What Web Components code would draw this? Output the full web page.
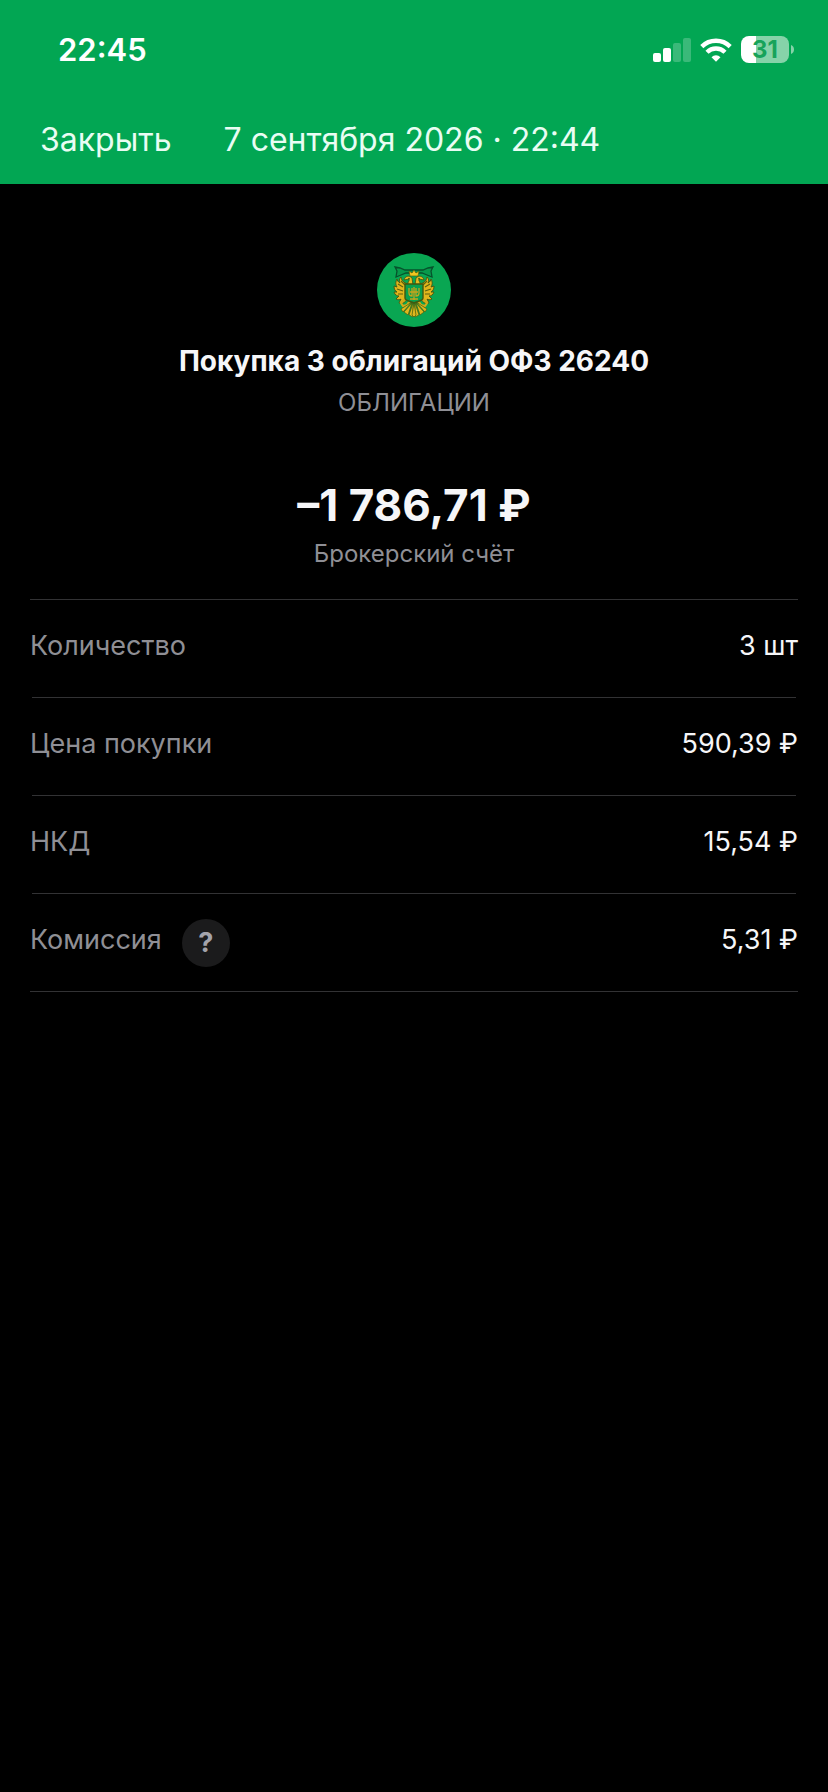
<!DOCTYPE html>
<html lang="ru">
<head>
<meta charset="UTF-8">
<meta name="viewport" content="width=device-width, initial-scale=1">
<title>Покупка 3 облигаций ОФЗ 26240</title>
<style>
    :root {
        --green: #02a653;
        --bg: #000;
        --text-main: #f6f6f8;
        --text-muted: #8f8f95;
        --line: #323234;
        --chip: #1b1b1c;
    }
    body {
        margin: 0;
        min-height: 100vh;
        background: var(--bg);
        color: var(--text-main);
        font-family: Inter, "Liberation Sans", sans-serif;
    }
</style>
</head>
<body>
<operation-screen></operation-screen>

<script>
class StatusBar extends HTMLElement {
    constructor() {
        super();
        this.attachShadow({ mode: 'open' });
    }

    connectedCallback() {
        this.shadowRoot.innerHTML = `
            <style>
                :host {
                    display: flex;
                    justify-content: space-between;
                    align-items: center;
                    height: 99px;
                    padding: 0 34px 0 58px;
                    color: #fff;
                }
                time {
                    font-size: 31px;
                    line-height: 40px;
                    font-weight: 600;
                }
                .icons {
                    display: flex;
                    align-items: center;
                    gap: 9px;
                }
                svg { display: block; }
                .battery {
                    display: flex;
                    align-items: center;
                    gap: 2px;
                }
                .level {
                    width: 48px;
                    height: 27px;
                    border-radius: 8px;
                    background: linear-gradient(90deg, #fff 31%, #86d3a9 31%);
                    color: #17a35a;
                    font-size: 24px;
                    line-height: 27px;
                    font-weight: 700;
                    text-align: center;
                }
            </style>
            <time><slot></slot></time>
            <div class="icons">
                <svg width="38" height="24" viewBox="0 0 38 24" fill="#fff" aria-hidden="true">
                    <rect x="0" y="15" width="8" height="9" rx="2"/>
                    <rect x="10" y="10" width="8" height="14" rx="2"/>
                    <g opacity=".22">
                        <rect x="20" y="5" width="8" height="19" rx="2"/>
                        <rect x="30" y="0" width="8" height="24" rx="2"/>
                    </g>
                </svg>
                <svg width="32" height="24" viewBox="0 0 32 24" fill="none" stroke="#fff" stroke-width="4.4" aria-hidden="true">
                    <path d="M1.8 8.6a20.2 20.2 0 0 1 28.4 0"/>
                    <path d="M7 14.2a12.8 12.8 0 0 1 18 0"/>
                    <path d="M16 23.8l-4.5-4.6a6.4 6.4 0 0 1 9 0z" fill="#fff" stroke="none"/>
                </svg>
                <div class="battery">
                    <div class="level">${this.getAttribute('battery')}</div>
                    <svg width="3" height="9" viewBox="0 0 3 9" fill="#86d3a9" aria-hidden="true">
                        <path d="M0 0c4 1.5 4 7.500 0 9z"/>
                    </svg>
                </div>
            </div>
        `;
    }
}

class NavBar extends HTMLElement {
    constructor() {
        super();
        this.attachShadow({ mode: 'open' });
    }

    connectedCallback() {
        this.shadowRoot.innerHTML = `
            <style>
                :host {
                    display: flex;
                    align-items: center;
                    gap: 52px;
                    padding: 21px 40px 24px;
                    color: #e9fdf3;
                    font-size: 32px;
                    line-height: 40px;
                    white-space: nowrap;
                }
                button {
                    padding: 0;
                    border: none;
                    background: none;
                    color: inherit;
                    font: inherit;
                    cursor: pointer;
                }
                h1 {
                    margin: 0;
                    font: inherit;
                }
            </style>
            <button type="button">Закрыть</button>
            <h1><slot></slot></h1>
        `;
    }
}

class BondLogo extends HTMLElement {
    constructor() {
        super();
        this.attachShadow({ mode: 'open' });
    }

    connectedCallback() {
        this.shadowRoot.innerHTML = `
            <style>
                :host {
                    display: block;
                    width: 74px;
                    height: 74px;
                }
                svg { display: block; }
            </style>
            <svg width="74" height="74" viewBox="0 0 74 74" aria-hidden="true">
                <circle cx="37" cy="37" r="37" fill="#09a652"/>
                <!-- ribbon -->
                <path d="M18 14l5 1 5 2h18l5-2 5-1-2 4 1 6-5-2-5-2H29l-5 2-5 2 1-6z" fill="#08994b" stroke="#06512b" stroke-width="1.3"/>
                <!-- wings -->
                <g id="wing">
                    <path d="M30 31c-3-2-5-2-6-7-2 2-2 4-1 6-2-1-3-3-3-4-2 4-1 6 0 8l-3-1c0 3 1 5 3 6h-3c1 3 3 4 5 4l-3 3c2 1 4 1 5 0l-2 4c3 1 6 0 8-4z" fill="#e0b51c" stroke="#45530f" stroke-width=".9"/>
                    <path d="M21 31l5 3M20 36l6 2M21 41l5 0M24 28l4 4" stroke="#5c610f" stroke-width="1.100"/>
                    <path d="M31 32c-1-3 2-4 1-6l-5 1c1-4 5-5 8-2l1 7z" fill="#e4bd22" stroke="#45530f" stroke-width=".8"/>
                    <path d="M28 46l-4 4 2 3 4-1 3-4" fill="none" stroke="#d2aa19" stroke-width="2.200"/>
                    <circle cx="32" cy="25.500" r=".8" fill="#41500d"/>
                </g>
                <use href="#wing" transform="matrix(-1 0 0 1 74 0)"/>
                <!-- tail -->
                <g fill="#dfb71d" stroke="#45600f" stroke-width=".7">
                    <path d="M35 49l-11 7 2 3zM39 49l11 7-2 3z"/>
                    <path d="M35 50l-8 9 4 3zM39 50l8 9-4 3z"/>
                    <path d="M36 50l-4 12 4 2zM38 50l4 12-4 2z"/>
                    <path d="M37 50l-2 12 2 2 2-2z"/>
                </g>
                <!-- crown -->
                <path d="M33 23l-1-5 3 2 2-3 2 3 3-2-1 5z" fill="#f1c71f" stroke="#5a610f" stroke-width=".7"/>
                <!-- shield -->
                <path d="M28 31h18v14c0 3-5 3-9 5-4-2-9-2-9-5z" fill="#099f4d" stroke="#40580f" stroke-width="1.400"/>
                <path d="M32 35v5q0 3 3 3v-8M42 35v5q0 3-3 3v-8M37 34v13M33 46h8M33 39h8" fill="none" stroke="#c5a51d" stroke-width="1.300"/>
            </svg>
        `;
    }
}

class OperationSummary extends HTMLElement {
    constructor() {
        super();
        this.attachShadow({ mode: 'open' });
    }

    connectedCallback() {
        this.shadowRoot.innerHTML = `
            <style>
                :host {
                    display: flex;
                    flex-direction: column;
                    align-items: center;
                    padding: 69px 30px 29px;
                    text-align: center;
                }
                h2, p { margin: 0; }
                h2 {
                    margin-top: 16px;
                    font-size: 28px;
                    line-height: 36px;
                    font-weight: 700;
                }
                .muted {
                    color: var(--text-muted);
                    font-size: 24px;
                    line-height: 32px;
                }
                .kind { margin-top: 8px; }
                .amount {
                    margin-top: 58px;
                    font-size: 44px;
                    line-height: 56px;
                    font-weight: 700;
                }
                .account { margin-top: 5px; }
            </style>
            <bond-logo></bond-logo>
            <h2><slot name="title"></slot></h2>
            <p class="muted kind"><slot name="kind"></slot></p>
            <p class="amount"><slot name="amount"></slot></p>
            <p class="muted account"><slot name="account"></slot></p>
        `;
    }
}

class DetailRow extends HTMLElement {
    constructor() {
        super();
        this.attachShadow({ mode: 'open' });
    }

    connectedCallback() {
        this.shadowRoot.innerHTML = `
            <style>
                :host {
                    display: block;
                    font-size: 27px;
                    line-height: 36px;
                }
                .row {
                    display: flex;
                    align-items: center;
                    justify-content: space-between;
                    height: 97px;
                }
                hr {
                    height: 1px;
                    margin: 0 2px;
                    border: none;
                    background: var(--line);
                }
                :host(:last-child) hr { display: none; }
                .label {
                    display: flex;
                    align-items: center;
                    gap: 20px;
                    color: var(--text-muted);
                }
                .text { padding-bottom: 6px; }
                button {
                    width: 48px;
                    height: 48px;
                    padding: 0;
                    border: none;
                    border-radius: 50%;
                    background: var(--chip);
                    color: #a3a3ab;
                    font: inherit;
                    font-weight: 700;
                    cursor: pointer;
                }
            </style>
            <div class="row">
                <div class="label">
                    <span class="text">${this.getAttribute('label')}</span>
                    ${this.hasAttribute('help') ? '<button type="button">?</button>' : ''}
                </div>
                <span class="text"><slot></slot></span>
            </div>
            <hr>
        `;
    }
}

class DetailList extends HTMLElement {
    constructor() {
        super();
        this.attachShadow({ mode: 'open' });
    }

    connectedCallback() {
        this.shadowRoot.innerHTML = `
            <style>
                :host {
                    display: block;
                    margin: 0 30px;
                    border-top: 1px solid var(--line);
                    border-bottom: 1px solid var(--line);
                }
            </style>
            <slot></slot>
        `;
    }
}

class OperationScreen extends HTMLElement {
    constructor() {
        super();
        this.attachShadow({ mode: 'open' });
    }

    connectedCallback() {
        this.shadowRoot.innerHTML = `
            <style>
                :host { display: block; }
                header { background: var(--green); }
            </style>
            <header>
                <status-bar battery="31">22:45</status-bar>
                <nav-bar>7 сентября 2026 · 22:44</nav-bar>
            </header>
            <main>
                <operation-summary>
                    <span slot="title">Покупка 3 облигаций ОФЗ 26240</span>
                    <span slot="kind">ОБЛИГАЦИИ</span>
                    <span slot="amount">–1 786,71 ₽</span>
                    <span slot="account">Брокерский счёт</span>
                </operation-summary>
                <detail-list>
                    <detail-row label="Количество">3 шт</detail-row>
                    <detail-row label="Цена покупки">590,39 ₽</detail-row>
                    <detail-row label="НКД">15,54 ₽</detail-row>
                    <detail-row label="Комиссия" help>5,31 ₽</detail-row>
                </detail-list>
            </main>
        `;
    }
}

customElements.define('status-bar', StatusBar);
customElements.define('nav-bar', NavBar);
customElements.define('bond-logo', BondLogo);
customElements.define('operation-summary', OperationSummary);
customElements.define('detail-row', DetailRow);
customElements.define('detail-list', DetailList);
customElements.define('operation-screen', OperationScreen);
</script>
</body>
</html>
